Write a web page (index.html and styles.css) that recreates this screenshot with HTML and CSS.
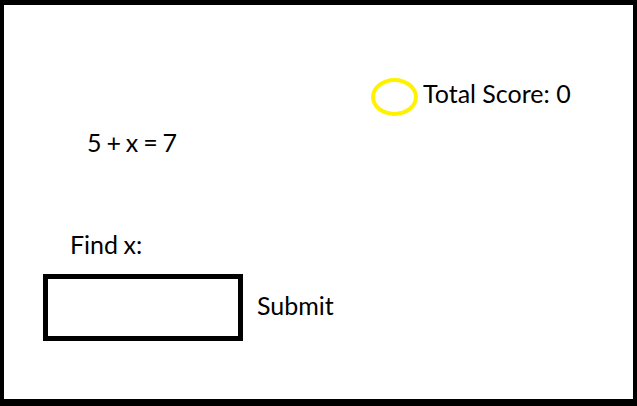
FILE: index.html
```html
<!DOCTYPE html>
<html>
<head>
<meta charset="utf-8">
<link rel="stylesheet" href="styles.css">
</head>
<body>
<div class="frame">
  <div class="score-row">
    <span class="coin"></span>
    <span class="score">Total Score: 0</span>
  </div>
  <div class="equation">5 + x = 7</div>
  <div class="prompt">Find x:</div>
  <div class="answer-row">
    <input class="answer" type="text" aria-label="x">
    <button class="submit" type="button">Submit</button>
  </div>
</div>
</body>
</html>
```
FILE: styles.css
```css
html, body {
  margin: 0;
  padding: 0;
  background: #fff;
}
.frame {
  box-sizing: border-box;
  width: 637px;
  height: 406px;
  border-style: solid;
  border-color: #000;
  border-width: 5px 4px 7px 4px;
  font-family: Lato, "Open Sans", sans-serif;
  font-size: 25px;
  line-height: 30px;
  color: #000;
  display: flex;
  flex-direction: column;
  align-items: flex-start;
}
.score-row {
  display: flex;
  align-items: flex-start;
  gap: 5px;
  margin-top: 73px;
  padding-left: 367px;
}
.coin {
  box-sizing: border-box;
  width: 47px;
  height: 38px;
  border: 4px solid #fff200;
  border-radius: 50%;
}
.equation {
  margin-top: 11px;
  padding-left: 83px;
  word-spacing: -1.5px;
}
.prompt {
  margin-top: 72px;
  padding-left: 66px;
  word-spacing: -1px;
}
.answer-row {
  display: flex;
  align-items: flex-start;
  gap: 14px;
  margin-top: 15px;
  padding-left: 39px;
}
.answer {
  box-sizing: border-box;
  width: 200px;
  height: 67px;
  border: 5px solid #000;
  border-radius: 0;
  margin: 0;
  padding: 0 6px;
  font: inherit;
  outline: none;
  background: #fff;
}
.submit {
  margin-top: 16px;
  padding: 0;
  border: none;
  background: none;
  font: inherit;
  color: #000;
  line-height: 30px;
}
```
